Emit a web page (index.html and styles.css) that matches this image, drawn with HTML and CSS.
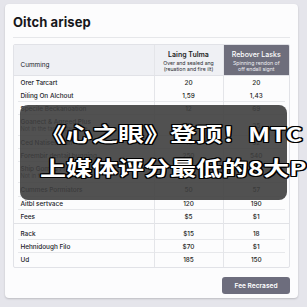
FILE: index.html
```html
<!DOCTYPE html>
<html>
<head>
<meta charset="utf-8">
<link rel="stylesheet" href="styles.css">
</head>
<body>
<div class="card">
  <h1 class="title">Oitch arisep</h1>
  <div class="divider"></div>
  <div class="table">
    <div class="row head">
      <div class="cell label">Cumming</div>
      <div class="cell col">
        <div class="h-main">Laing Tulma</div>
        <div class="h-sub">Over and sealed ang</div>
        <div class="h-sub">(reuation and fire ilt)</div>
      </div>
      <div class="cell col dark">
        <div class="h-main">Rebover Lasks</div>
        <div class="h-sub">Spinning rendon of</div>
        <div class="h-sub">off endall signt</div>
      </div>
    </div>
    <div class="row r13 noline"><div class="cell label">Orer Tarcart</div><div class="cell num">20</div><div class="cell num">20</div></div>
    <div class="row r13"><div class="cell label">Diling On Alchout</div><div class="cell num">1,59</div><div class="cell num">1,43</div></div>
    <div class="row r13"><div class="cell label">Specile Beckanoation</div><div class="cell num">12</div><div class="cell num">69</div></div>
    <div class="row r21"><div class="cell label two"><span>Goanect &amp; Agreed Plus</span><span class="sub">Not in the tarihn daudaue</span></div><div class="cell num">19</div><div class="cell num">25</div></div>
    <div class="row r13"><div class="cell label">Ced Natises Plan</div><div class="cell num">48</div><div class="cell num">32</div></div>
    <div class="row r13"><div class="cell label">Forembir dentail bugging</div><div class="cell num">250</div><div class="cell num">540</div></div>
    <div class="row r21"><div class="cell label two"><span>Ship Gomed Plan</span><span class="sub">Not in the tarihn daudaue</span></div><div class="cell num">14</div><div class="cell num">22</div></div>
    <div class="row r14"><div class="cell label">Cummes Pormiators</div><div class="cell num">50</div><div class="cell num">57</div></div>
    <div class="row r13"><div class="cell label">Aitbl sertvace</div><div class="cell num">120</div><div class="cell num">190</div></div>
    <div class="row r14 section"><div class="cell label">Fees</div><div class="cell num">$5</div><div class="cell num">$1</div></div>
    <div class="row r16 top"><div class="cell label">Rack</div><div class="cell num">$15</div><div class="cell num">18</div></div>
    <div class="row r13"><div class="cell label">Hehnidough Filo</div><div class="cell num">$70</div><div class="cell num">$1</div></div>
    <div class="row r14 noline"><div class="cell label">Ud</div><div class="cell num">185</div><div class="cell num">150</div></div>
  </div>
  <div class="actions"><button class="btn">Fee Recrased</button></div>
</div>
<div class="caption">
  <div class="cap-line">《心之眼》登顶！MTC</div>
  <div class="cap-line">上媒体评分最低的8大P</div>
</div>
</body>
</html>
```
FILE: styles.css
```css
* { box-sizing: border-box; }
html, body { margin: 0; padding: 0; }
body {
  width: 307px;
  height: 307px;
  background: #e5e5eb;
  font-family: Inter, "Noto Sans", "Liberation Sans", sans-serif;
  color: #1e1f24;
  padding: 4px 9px 0 5px;
  overflow: hidden;
  position: relative;
}
.card {
  width: 293px;
  height: 294px;
  background: #fcfcfd;
  border-radius: 4px;
  box-shadow: 0 1px 2px rgba(0,0,0,0.18);
  padding: 0 8px 0 7.5px;
}
.title {
  margin: 0;
  padding: 10px 0 0 0.5px;
  font-size: 13px;
  line-height: 16px;
  font-weight: 700;
  letter-spacing: 0.1px;
  color: #16171b;
}
.divider {
  height: 1px;
  background: #e6e7ea;
  margin-top: 7px;
}
.table {
  margin-top: 6px;
  border: 1px solid #e1e2e7;
  border-radius: 2px;
  overflow: hidden;
}
.row {
  display: grid;
  grid-template-columns: 140px 69px 1fr;
  background: linear-gradient(#e7e8eb, #e7e8eb) no-repeat left 4px bottom / calc(100% - 8px) 1px;
}
.row.noline { background: none; }
.row.section { background: linear-gradient(#e1e2e6, #e1e2e6) no-repeat left bottom / 100% 1px; }
.head {
  height: 31px;
  background: #eff0f4;
  border-bottom: 1px solid #e1e2e7;
}
.r13 { height: 13px; }
.r14 { height: 14px; }
.r16 { height: 16px; }
.r21 { height: 21px; }
.row.top .cell { padding-top: 4px; }
.cell {
  display: flex;
  align-items: center;
  font-size: 6.4px;
  line-height: 8px;
  white-space: nowrap;
}
.cell + .cell { border-left: 1px solid #e4e5e9; }
.label {
  padding-left: 7px;
  font-weight: 500;
  color: #202127;
}
.label.two {
  flex-direction: column;
  align-items: flex-start;
  justify-content: center;
}
.sub { font-size: 5.6px; line-height: 7px; color: #3a3b42; font-weight: 400; }
.num {
  justify-content: center;
  font-weight: 500;
}
.head .label {
  align-items: flex-end;
  padding-bottom: 6px;
  font-weight: 400;
}
.head .col {
  flex-direction: column;
  justify-content: flex-start;
  padding-top: 6px;
  text-align: center;
}
.h-main { font-size: 7px; line-height: 8px; font-weight: 600; margin-bottom: 1px; }
.h-sub { font-size: 5.2px; line-height: 6px; color: #2a2b31; }
.dark {
  background: #6e6e7c;
  color: #ffffff;
}
.dark .h-main { font-weight: 500; }
.dark .h-sub { color: #f0f0f4; }
.actions {
  display: flex;
  justify-content: flex-end;
  margin-top: 9px;
}
.btn {
  width: 68px;
  height: 17px;
  border: 0;
  border-radius: 3px;
  background: #6d6d7d;
  color: #ffffff;
  font-family: Inter, "Noto Sans", sans-serif;
  font-size: 6.6px;
  font-weight: 600;
  padding: 0;
}
.caption {
  position: absolute;
  left: 20px;
  top: 105px;
  width: 267px;
  height: 95px;
  border-radius: 8px;
  background: rgba(62, 62, 62, 0.9);
  padding: 12px 0 0 20px;
  overflow: visible;
}
.cap-line {
  font-family: "Noto Sans CJK SC", "Noto Sans", sans-serif;
  font-size: 20px;
  line-height: 34px;
  font-weight: 700;
  color: #ffffff;
  white-space: nowrap;
  transform: scaleX(1.3);
  transform-origin: left center;
  text-shadow: 1px 0 0 #000, -1px 0 0 #000, 0 1px 0 #000, 0 -1px 0 #000,
    1px 1px 0 #000, -1px -1px 0 #000, 1px -1px 0 #000, -1px 1px 0 #000;
}
```
